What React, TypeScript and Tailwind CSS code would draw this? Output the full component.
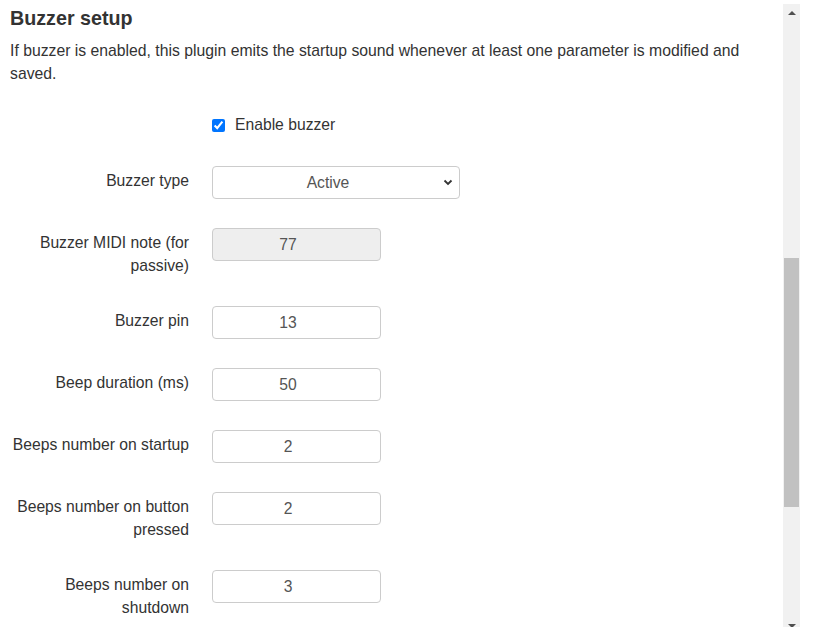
import { useState } from "react";

const fields = [
  { label: "Buzzer MIDI note (for passive)", value: "77", disabled: true },
  { label: "Buzzer pin", value: "13" },
  { label: "Beep duration (ms)", value: "50" },
  { label: "Beeps number on startup", value: "2" },
  { label: "Beeps number on button pressed", value: "2" },
  { label: "Beeps number on shutdown", value: "3" },
];

const Row = ({ label, children }: { label: string; children: React.ReactNode }) => (
  <div className="flex items-start gap-[23px] mb-[29px]">
    <label className="w-[179px] shrink-0 text-right pt-[4px] leading-[22.5px] text-[15.7px] text-[#333]">
      {label}
    </label>
    {children}
  </div>
);

const App = () => {
  const [enabled, setEnabled] = useState(true);
  const [type, setType] = useState("Active");

  return (
    <div
      className="flex h-[627px] overflow-hidden bg-white"
      style={{ fontFamily: '"Liberation Sans", Arial, sans-serif' }}>
      <div className="w-[783px] shrink-0 px-[10px] pt-[7px]">
        <h4 className="text-[19.7px] font-bold leading-[22px] text-[#333]">Buzzer setup</h4>
        <p className="mt-[10px] text-[15.75px] leading-[23px] text-[#333]">
          If buzzer is enabled, this plugin emits the startup sound whenever at least one parameter is modified and
          saved.
        </p>

        <div className="mt-[29px] mb-[30px] flex items-center gap-[10px] pl-[202px] h-[22px]">
          <input
            type="checkbox"
            checked={enabled}
            onChange={() => setEnabled(!enabled)}
            className="w-[13px] h-[13px] accent-[#0075ff]"
          />
          <span className="text-[15.7px] text-[#333]">Enable buzzer</span>
        </div>

        <Row label="Buzzer type">
          <div className="relative w-[248px]">
            <select
              value={type}
              onChange={(e) => setType(e.target.value)}
              className="appearance-none w-full h-[33px] border border-[#ccc] rounded-[4px] bg-white pl-[12px] pr-[28px] text-center text-[15.7px] text-[#555]">
              <option>Active</option>
              <option>Passive</option>
            </select>
            <svg
              className="absolute right-[7px] top-[13px] pointer-events-none"
              width="10"
              height="7"
              viewBox="0 0 10 7">
              <path d="M1.5 1.5 L5 5 L8.5 1.5" fill="none" stroke="#333" strokeWidth="1.8" />
            </svg>
          </div>
        </Row>

        {fields.map((f) => (
          <Row key={f.label} label={f.label}>
            <input
              type="text"
              defaultValue={f.value}
              disabled={f.disabled}
              className={
                "w-[169px] h-[33px] border border-[#ccc] rounded-[4px] pl-[12px] pr-[29px] text-center text-[15.7px] text-[#555] " +
                (f.disabled ? "bg-[#eee]" : "bg-white")
              }
            />
          </Row>
        ))}
      </div>

      <div className="w-[17px] shrink-0 mt-[4px] h-[630px] bg-[#f1f1f1] flex flex-col">
        <div className="h-[17px] flex items-center justify-center">
          <svg width="8" height="4" viewBox="0 0 8 4">
            <polygon points="0,4 8,4 4,0" fill="#505050" />
          </svg>
        </div>
        <div className="h-[237px]" />
        <div className="h-[249px] mx-[1px] bg-[#c1c1c1]" />
        <div className="flex-1" />
        <div className="h-[17px] flex items-center justify-center">
          <svg width="8" height="4" viewBox="0 0 8 4">
            <polygon points="0,0 8,0 4,4" fill="#505050" />
          </svg>
        </div>
      </div>
    </div>
  );
};

export default App;
